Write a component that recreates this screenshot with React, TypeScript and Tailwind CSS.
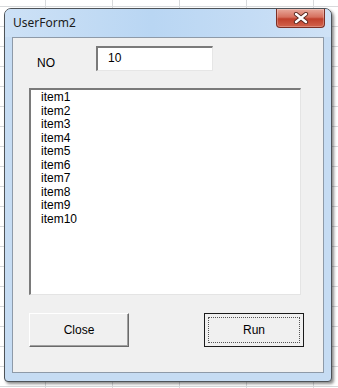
const items = ['item1', 'item2', 'item3', 'item4', 'item5', 'item6', 'item7', 'item8', 'item9', 'item10'];

const font = "font-['Liberation_Sans',Arial,sans-serif]";

function CloseGlyph() {
  return (
    <svg width="16" height="12" viewBox="0 0 16 12">
      <path d="M3 2 L13 10 M13 2 L3 10" stroke="#5a2a22" strokeWidth="4.2" strokeLinecap="round" />
      <path d="M3 2 L13 10 M13 2 L3 10" stroke="#ffffff" strokeWidth="2.4" strokeLinecap="round" />
    </svg>
  );
}

export default function App() {
  return (
    <div
      className={`w-[338px] h-[388px] overflow-hidden bg-white pt-[8px] pl-[4px] ${font}
        bg-[linear-gradient(to_right,#d8dadc_1px,transparent_1px),linear-gradient(to_bottom,#d8dadc_1px,transparent_1px)]
        bg-[length:67px_20px] bg-[position:45px_6px]`}
    >
      {/* Window */}
      <div className="w-[328px] h-[374px] flex flex-col rounded-t-[7px] rounded-b-[4px] border border-[#4e5358] bg-[#c6dcf3] shadow-[2px_2px_3px_rgba(0,0,0,0.45)] overflow-hidden">
        {/* Title bar */}
        <div className="h-[28px] flex items-start justify-between bg-[linear-gradient(to_right,#cde1f6,#b9d6f3_45%,#c4dcf5_75%,#cfe2f6)]">
          <span className="pl-[8px] pt-[7px] text-[12px] leading-[14px] text-[#1b1b1b] font-['Noto_Sans',sans-serif]">
            UserForm2
          </span>
          <div className="mr-[6px] w-[49px] h-[19px] flex items-center justify-center rounded-b-[4px] border border-t-0 border-[#7c2f25] bg-[linear-gradient(to_bottom,#e8a89b,#d6705e_45%,#c0402c_55%,#d2644d)] shadow-[inset_0_0_0_1px_rgba(255,255,255,0.25)]">
            <CloseGlyph />
          </div>
        </div>

        {/* Client area */}
        <div className="mx-[7px] mb-[8px] flex-1 border border-[#8e9aa8] bg-[#f0f0f0] flex flex-col pl-[16px] text-[12px] text-black">
          <div className="flex items-start h-[50px]">
            <span className="w-[67px] pt-[18px] pl-[8px] leading-[14px]">NO</span>
            <div className="mt-[8px] w-[117px] h-[25px] border-t-2 border-l-2 border-t-[#7a7a7a] border-l-[#7a7a7a] border-b border-r border-b-[#e6e6e6] border-r-[#e6e6e6] bg-white pl-[10px] pt-[3px] leading-[14px]">
              10
            </div>
          </div>

          <div className="w-[272px] h-[207px] border-t-2 border-l-2 border-t-[#7a7a7a] border-l-[#7a7a7a] border-b border-r border-b-[#e4e4e4] border-r-[#e4e4e4] bg-white pl-[10px] pt-[1px]">
            {items.map((it) => (
              <div key={it} className="leading-[13.55px]">
                {it}
              </div>
            ))}
          </div>

          <div className="mt-[18px] flex items-start w-[275px] justify-between">
            <button className="w-[100px] h-[34px] bg-[#f0f0f0] border border-t-white border-l-white border-r-[#6a6a6a] border-b-[#6a6a6a] shadow-[inset_-1px_-1px_0_#a0a0a0] text-[12px] text-black">
              Close
            </button>
            <button className="w-[100px] h-[34px] bg-[#f0f0f0] border border-[#1a1a1a] p-[3px] text-[12px] text-black">
              <div className="w-full h-full flex items-center justify-center border border-dotted border-[#555]">
                Run
              </div>
            </button>
          </div>
        </div>
      </div>
    </div>
  );
}
